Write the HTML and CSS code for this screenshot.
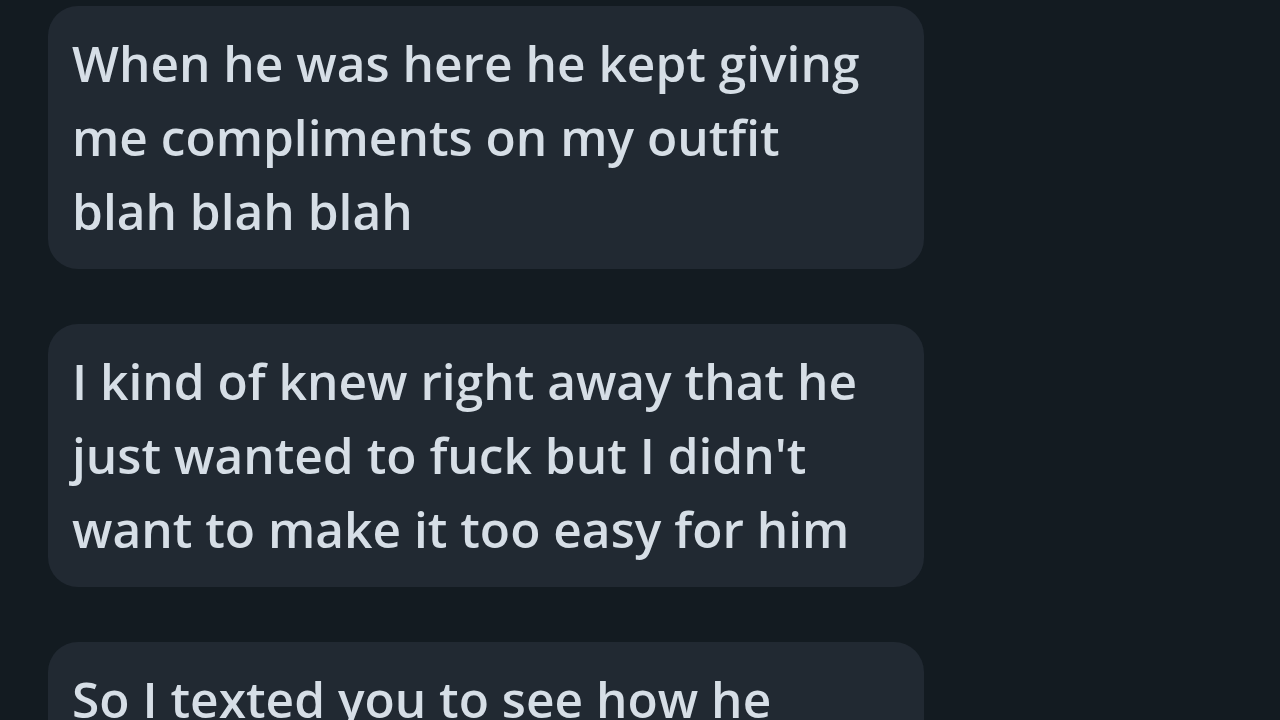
FILE: index.html
```
<!DOCTYPE html>
<html>
  <head>
    <meta charset="UTF-8" />
    <title>Chat</title>
    <link rel="stylesheet" href="styles.css">
  </head>

  <body>
    <div class="chat-messages">
      <div class="message">
        When he was here he kept giving<br>
        me compliments on my outfit<br>
        blah blah blah
      </div>
      <div class="message">
        I kind of knew right away that he<br>
        just wanted to fuck but I didn't<br>
        want to make it too easy for him
      </div>
      <div class="message">
        So I texted you to see how he<br>
        reacted when I said I was busy
      </div>
    </div>
  </body>
</html>
```

FILE: styles.css
```
* {
  box-sizing: border-box;
}

body {
  margin: 0;
  font-family: "Open Sans", "Noto Sans", sans-serif;
  background-color: #131b21;
  height: 720px;
  overflow: hidden;
}

.chat-messages {
  display: flex;
  flex-direction: column;
  align-items: flex-start;
  gap: 55px;
  padding: 6px 0 0 48px;
}

.message {
  width: 876px;
  padding: 20px 24px 21px;
  border-radius: 30px;
  background-color: #212932;
  color: #d6dee6;
  font-size: 49.6px;
  font-weight: 600;
  line-height: 74px;
  white-space: nowrap;
}
```
